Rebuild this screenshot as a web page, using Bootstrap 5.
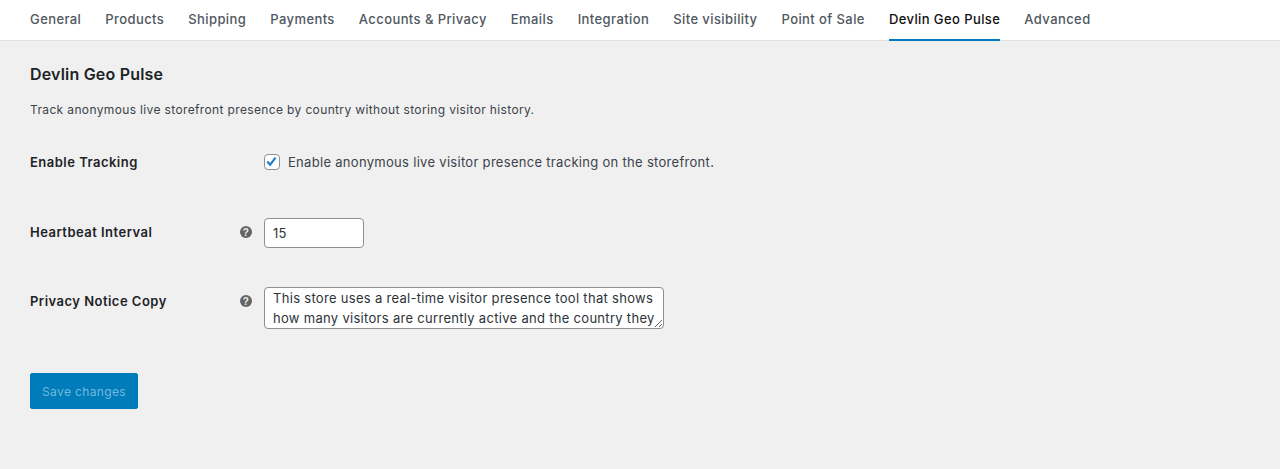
<!DOCTYPE html>
<html lang="en">
<head>
<meta charset="utf-8">
<title>Devlin Geo Pulse</title>
<link rel="stylesheet" href="https://cdn.jsdelivr.net/npm/bootstrap@5.3.0/dist/css/bootstrap.min.css">
<style>
html,body{height:469px;overflow:hidden}
body{background:#f0f0f0;font-family:Inter,"Liberation Sans",sans-serif;font-size:13px;line-height:20px;color:#3c434a}
.tabbar{background:#fff;height:41px;border-bottom:1px solid #e0e0e0;padding:0 30px;gap:24px}
.tabitem{display:block;height:41px;padding-top:9px;font-weight:500;font-size:13px;line-height:20px;letter-spacing:.41px;color:#50575e;text-decoration:none;white-space:nowrap}
.tabitem.sel{color:#111;border-bottom:2px solid #007cba}
.pane{padding:0 30px}
.pane h2{font-size:16px;line-height:20px;font-weight:600;letter-spacing:.19px;color:#1d2327;margin:23px 0 0}
.intro{margin:16px 0 0;line-height:20px;font-size:12px;letter-spacing:.36px}
.setrow{display:flex;align-items:flex-start}
.setlabel{width:234px;flex:none;font-weight:600;letter-spacing:.48px;color:#1d2327;display:flex;justify-content:space-between;padding-right:12px;margin:0}
.tip{width:12px;height:12px;display:block;margin-top:4px}
.r1{margin-top:32px;height:20px}
.r2{margin-top:46px}
.r3{margin-top:39px}
.chk{width:16px;height:16px;border:1px solid #8c8f94;border-radius:4px;background:#fff;display:block;flex:none;margin:2px 8px 0 0;padding:0}
.chktext{letter-spacing:.3px}
.numinput,.notearea{border:1px solid #8c8f94;border-radius:4px;background:#fff;color:#2c3338;padding:0 8px;font:13px/20px Inter,"Liberation Sans",sans-serif;letter-spacing:.3px;display:block;outline:0}
.numinput{width:100px;height:30px}
.notearea{width:400px;height:42px;resize:vertical;overflow:hidden}
.savebtn{width:108px;height:36px;margin-top:44px;padding:1px 0 0;border-radius:2px;font-size:12px;line-height:20px;letter-spacing:.36px;font-weight:400}
.savebtn:disabled{background:#007cba;border:1px solid #007cba;color:#74b8dc;opacity:1}
.r2 .setlabel,.r3 .setlabel{padding-top:4px}
</style>
</head>
<body>
<nav class="tabbar d-flex align-items-start">
<a class="tabitem" href="#">General</a>
<a class="tabitem" href="#">Products</a>
<a class="tabitem" href="#">Shipping</a>
<a class="tabitem" href="#">Payments</a>
<a class="tabitem" href="#">Accounts &amp; Privacy</a>
<a class="tabitem" href="#">Emails</a>
<a class="tabitem" href="#">Integration</a>
<a class="tabitem" href="#">Site visibility</a>
<a class="tabitem" href="#">Point of Sale</a>
<a class="tabitem sel" href="#">Devlin Geo Pulse</a>
<a class="tabitem" href="#">Advanced</a>
</nav>
<main class="pane">
<h2>Devlin Geo Pulse</h2>
<p class="intro">Track anonymous live storefront presence by country without storing visitor history.</p>
<div class="setrow r1">
<div class="setlabel">Enable Tracking</div>
<div class="d-flex">
<span class="chk"><svg viewBox="0 0 16 16" width="14" height="14" class="d-block"><path d="M2.6 7.4 L5.9 11.2 L12 3" fill="none" stroke="#2b7fc9" stroke-width="2.6"/></svg></span>
<span class="chktext">Enable anonymous live visitor presence tracking on the storefront.</span>
</div>
</div>
<div class="setrow r2">
<div class="setlabel"><span>Heartbeat Interval</span>
<svg class="tip" viewBox="0 0 12 12"><circle cx="6" cy="6" r="6" fill="#646464"/><text x="6" y="9.6" text-anchor="middle" font-size="10" font-weight="700" fill="#f0f0f0" font-family="Liberation Sans">?</text></svg></div>
<input class="numinput" type="number" value="15">
</div>
<div class="setrow r3">
<div class="setlabel"><span>Privacy Notice Copy</span>
<svg class="tip" viewBox="0 0 12 12"><circle cx="6" cy="6" r="6" fill="#646464"/><text x="6" y="9.6" text-anchor="middle" font-size="10" font-weight="700" fill="#f0f0f0" font-family="Liberation Sans">?</text></svg></div>
<textarea class="notearea" rows="2">This store uses a real-time visitor presence tool that shows how many visitors are currently active and the country they are browsing from. No visitor history is stored.</textarea>
</div>
<button class="btn savebtn d-block" type="button" disabled>Save changes</button>
</main>
<script src="https://cdn.jsdelivr.net/npm/bootstrap@5.3.0/dist/js/bootstrap.bundle.min.js"></script>
</body>
</html>
